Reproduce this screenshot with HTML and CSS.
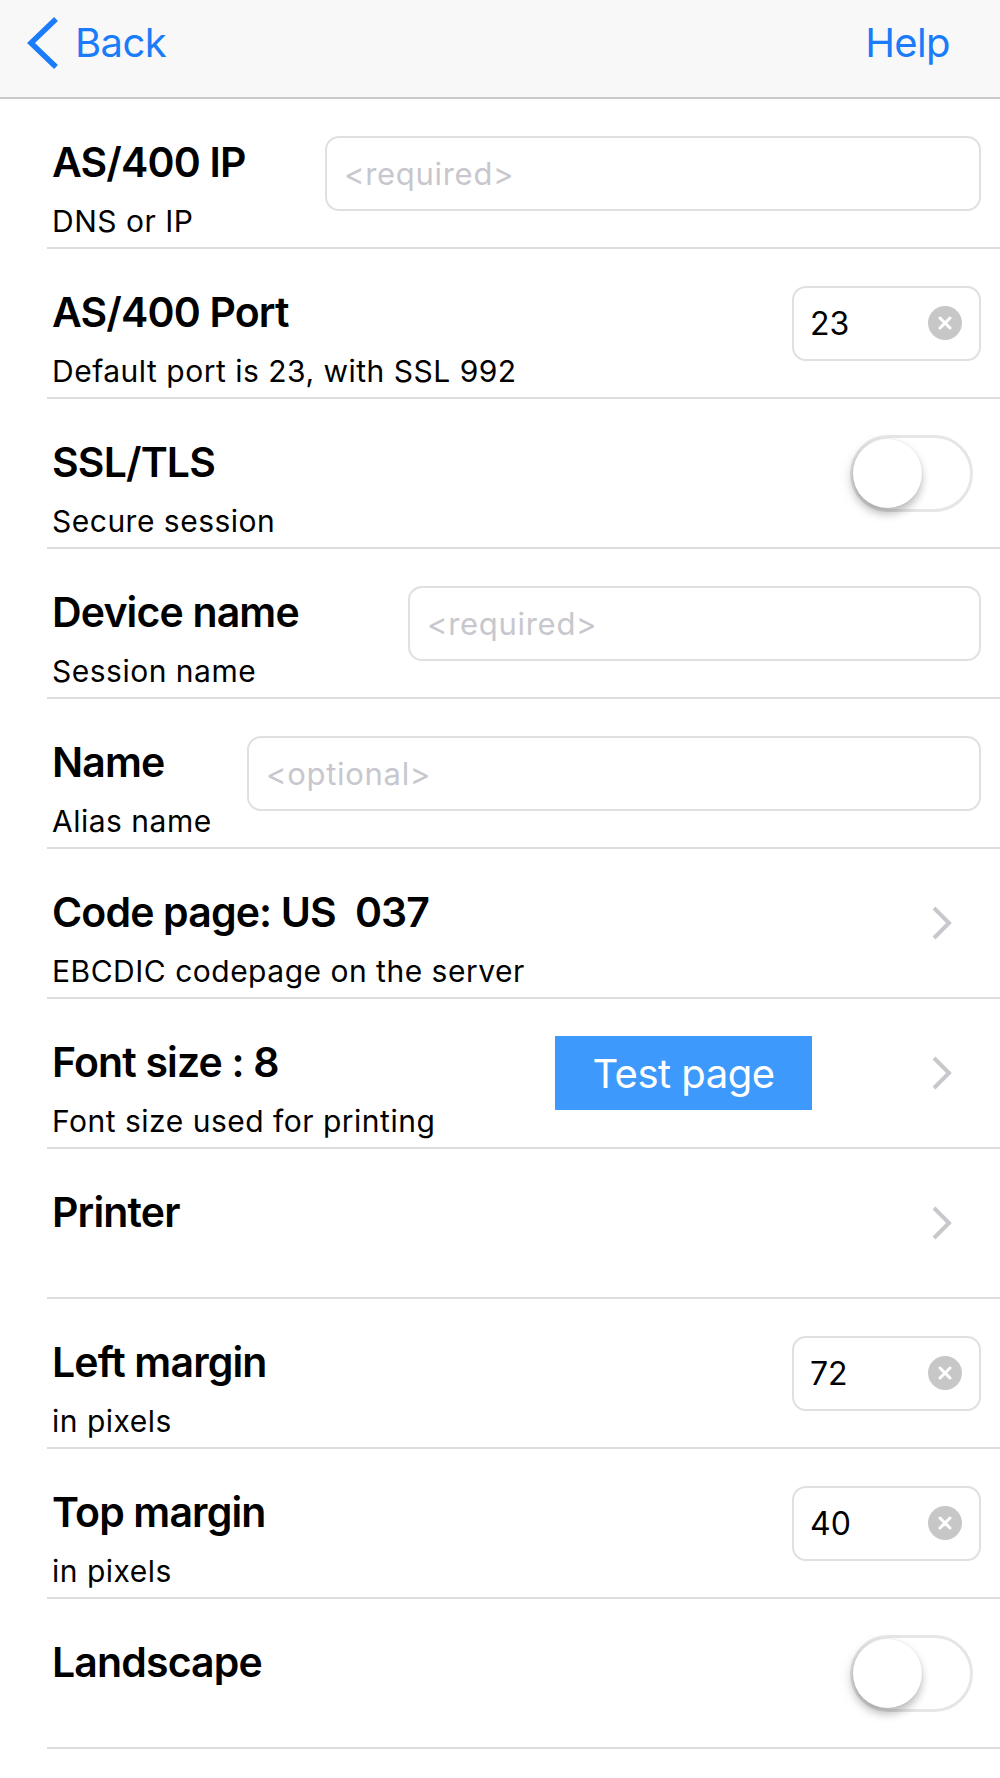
FILE: index.html
```
<!DOCTYPE html>
<html lang="en">
<head>
<meta charset="utf-8">
<title>Session settings</title>
<link rel="stylesheet" href="styles.css">
</head>
<body>
<header class="navbar">
  <a class="nav-back">
    <svg class="back-icon" width="36" height="56" viewBox="0 0 36 56" aria-hidden="true">
      <polyline points="30,3 5,27 30,51" fill="none" stroke="#1a7cfa" stroke-width="5.5" stroke-linejoin="miter"/>
    </svg>
    <span>Back</span>
  </a>
  <a class="nav-help">Help</a>
</header>

<main class="form">
  <div class="row">
    <div class="label"><div class="title">AS/400 IP</div><div class="sub">DNS or IP</div></div>
    <div class="field field-ip"><span class="placeholder">&lt;required&gt;</span></div>
  </div>

  <div class="row">
    <div class="label"><div class="title">AS/400 Port</div><div class="sub">Default port is 23, with SSL 992</div></div>
    <div class="field field-num"><span class="value">23</span><span class="clear"><svg width="14" height="14" viewBox="0 0 14 14"><path d="M2 2L12 12M12 2L2 12" stroke="#fff" stroke-width="3" stroke-linecap="round"/></svg></span></div>
  </div>

  <div class="row">
    <div class="label"><div class="title">SSL/TLS</div><div class="sub">Secure session</div></div>
    <div class="toggle"><span class="thumb"></span></div>
  </div>

  <div class="row">
    <div class="label"><div class="title">Device name</div><div class="sub">Session name</div></div>
    <div class="field field-device"><span class="placeholder">&lt;required&gt;</span></div>
  </div>

  <div class="row">
    <div class="label"><div class="title">Name</div><div class="sub">Alias name</div></div>
    <div class="field field-name"><span class="placeholder">&lt;optional&gt;</span></div>
  </div>

  <div class="row">
    <div class="label"><div class="title title-pre">Code page: US  037</div><div class="sub">EBCDIC codepage on the server</div></div>
    <svg class="chevron" width="24" height="36" viewBox="0 0 24 36" aria-hidden="true"><polyline points="4,3 19,18 4,33" fill="none" stroke="#c7c7cc" stroke-width="4"/></svg>
  </div>

  <div class="row">
    <div class="label"><div class="title">Font size : 8</div><div class="sub">Font size used for printing</div></div>
    <button class="test-btn">Test page</button>
    <svg class="chevron chevron-after-btn" width="24" height="36" viewBox="0 0 24 36" aria-hidden="true"><polyline points="4,3 19,18 4,33" fill="none" stroke="#c7c7cc" stroke-width="4"/></svg>
  </div>

  <div class="row">
    <div class="label"><div class="title">Printer</div></div>
    <svg class="chevron" width="24" height="36" viewBox="0 0 24 36" aria-hidden="true"><polyline points="4,3 19,18 4,33" fill="none" stroke="#c7c7cc" stroke-width="4"/></svg>
  </div>

  <div class="row">
    <div class="label"><div class="title">Left margin</div><div class="sub">in pixels</div></div>
    <div class="field field-num"><span class="value">72</span><span class="clear"><svg width="14" height="14" viewBox="0 0 14 14"><path d="M2 2L12 12M12 2L2 12" stroke="#fff" stroke-width="3" stroke-linecap="round"/></svg></span></div>
  </div>

  <div class="row">
    <div class="label"><div class="title">Top margin</div><div class="sub">in pixels</div></div>
    <div class="field field-num"><span class="value">40</span><span class="clear"><svg width="14" height="14" viewBox="0 0 14 14"><path d="M2 2L12 12M12 2L2 12" stroke="#fff" stroke-width="3" stroke-linecap="round"/></svg></span></div>
  </div>

  <div class="row">
    <div class="label"><div class="title">Landscape</div></div>
    <div class="toggle"><span class="thumb"></span></div>
  </div>
</main>
</body>
</html>
```
FILE: styles.css
```
* { box-sizing: border-box; }

html, body {
  margin: 0;
  padding: 0;
  background: #ffffff;
}

body {
  font-family: Inter, "Liberation Sans", Arial, sans-serif;
  color: #000;
  width: 1000px;
}

.navbar {
  height: 99px;
  background: #f8f8f8;
  border-bottom: 2px solid #c9c9c9;
  display: flex;
  align-items: center;
  justify-content: space-between;
  padding: 0 50px 12px 26px;
}

.nav-back {
  display: flex;
  align-items: center;
  color: #1a7cfa;
  font-size: 40px;
  letter-spacing: -0.6px;
  gap: 13px;
}

.back-icon { display: block; margin-top: 2px; }

.nav-help {
  color: #1a7cfa;
  font-size: 40px;
  letter-spacing: -0.6px;
}

.form {
  margin-left: 47px;
}

.row {
  height: 150px;
  border-bottom: 2px solid #dddddd;
  display: flex;
  align-items: center;
  padding: 0 19px 0 5px;
}

.label {
  align-self: flex-start;
  padding-top: 39px;
  flex: none;
}

.title {
  font-size: 41px;
  line-height: 48px;
  font-weight: 600;
  letter-spacing: -0.85px;
}

.title-pre { white-space: pre; }

.sub {
  font-size: 30px;
  line-height: 36px;
  margin-top: 17px;
  letter-spacing: 0.5px;
}

.field {
  margin-left: auto;
  height: 75px;
  border: 2px solid #e0e0e0;
  border-radius: 14px;
  display: flex;
  align-items: center;
  padding: 0 17px;
  background: #fff;
}

.field-ip { width: 656px; }
.field-device { width: 573px; }
.field-name { width: 734px; }
.field-num {
  width: 189px;
  justify-content: space-between;
  padding: 0 17px 0 16px;
}

.placeholder {
  font-size: 31px;
  color: #c7c7cd;
  letter-spacing: 0.7px;
}

.value {
  font-size: 32px;
}

.clear {
  width: 34px;
  height: 34px;
  border-radius: 50%;
  background: #c7c7c7;
  display: flex;
  align-items: center;
  justify-content: center;
}

.clear svg { display: block; }

.toggle {
  margin-left: auto;
  margin-right: 8px;
  width: 123px;
  height: 77px;
  border: 3px solid #e6e6e6;
  border-radius: 39px;
  background: #fff;
  position: relative;
}

.thumb {
  position: absolute;
  left: 0;
  top: 1px;
  width: 69px;
  height: 69px;
  border-radius: 50%;
  background: #fff;
  box-shadow: 0 6px 9px rgba(0, 0, 0, 0.22), 0 0 0 1px rgba(0, 0, 0, 0.04), -4px 4px 14px rgba(0, 0, 0, 0.08);
}

.chevron {
  display: block;
  margin-left: auto;
  margin-right: 27px;
}

.chevron-after-btn { margin-left: 0; }

.test-btn {
  margin-left: auto;
  margin-right: 118px;
  width: 257px;
  height: 74px;
  border: none;
  background: #3d9afc;
  color: #fff;
  font-family: Inter, "Liberation Sans", Arial, sans-serif;
  font-size: 40px;
  letter-spacing: -0.5px;
  padding: 0;
}
```
